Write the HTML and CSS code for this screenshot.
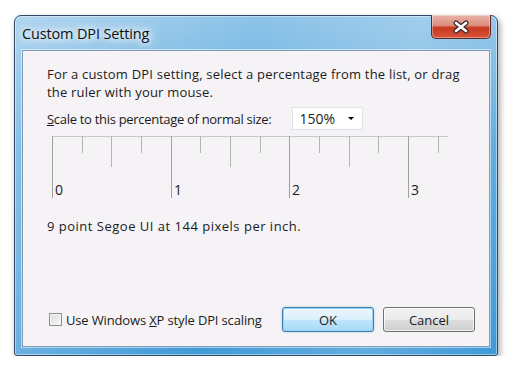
FILE: index.html
```html
<!DOCTYPE html>
<html lang="en">
<head>
    <meta charset="UTF-8">
    <meta name="viewport" content="width=device-width, initial-scale=1.0">
    <title>Custom DPI Setting</title>
    <link rel="stylesheet" href="styles.css">
</head>
<body>
<div class="window">
    <div class="titlebar">
        <span class="title">Custom DPI Setting</span>
        <button class="close" title="Close">
            <svg width="18" height="14" viewBox="-9 -7 18 14">
                <path d="M-5,-4 L5,4 M5,-4 L-5,4" stroke="#3a2a2a" stroke-width="5" stroke-linecap="round"/>
                <path d="M-5,-4 L5,4 M5,-4 L-5,4" stroke="#ffffff" stroke-width="2.6" stroke-linecap="round"/>
            </svg>
        </button>
    </div>

    <div class="client">
        <p class="intro">For a custom DPI setting, select a percentage from the list, or drag<br/>the ruler with your mouse.</p>

        <div class="scale-row">
            <label class="scale-label"><u>S</u>cale to this percentage of normal size:</label>
            <div class="combo">
                <span>150%</span>
                <span class="arrow"></span>
            </div>
        </div>

        <!-- ruler: one long tick per inch, quarter ticks between -->
        <svg class="ruler" width="397" height="63" viewBox="0 0 397 63">
            <g stroke="#b4b4b4" stroke-width="1">
                <line x1="0" y1="0.5" x2="396" y2="0.5" stroke="#c8c8c8"/>
                <line x1="0.5" y1="0" x2="0.5" y2="62" stroke="#a0a0a0"/>
                <line x1="30.5" y1="0" x2="30.5" y2="17"/>
                <line x1="59.5" y1="0" x2="59.5" y2="31"/>
                <line x1="89.5" y1="0" x2="89.5" y2="17"/>
                <line x1="119.5" y1="0" x2="119.5" y2="62" stroke="#a0a0a0"/>
                <line x1="148.5" y1="0" x2="148.5" y2="17"/>
                <line x1="178.5" y1="0" x2="178.5" y2="31"/>
                <line x1="208.5" y1="0" x2="208.5" y2="17"/>
                <line x1="237.5" y1="0" x2="237.5" y2="62" stroke="#a0a0a0"/>
                <line x1="267.5" y1="0" x2="267.5" y2="17"/>
                <line x1="297.5" y1="0" x2="297.5" y2="31"/>
                <line x1="326.5" y1="0" x2="326.5" y2="17"/>
                <line x1="356.5" y1="0" x2="356.5" y2="62" stroke="#a0a0a0"/>
                <line x1="386.5" y1="0" x2="386.5" y2="17"/>
            </g>
            <g class="ruler-nums">
                <text x="3" y="59">0</text>
                <text x="122" y="59">1</text>
                <text x="240" y="59">2</text>
                <text x="359" y="59">3</text>
            </g>
        </svg>

        <p class="sample">9 point Segoe UI at 144 pixels per inch.</p>

        <div class="footer">
            <label class="check"><span class="box"></span><span class="check-text">Use Windows <u>X</u>P style DPI scaling</span></label>
            <button class="btn btn-default">OK</button>
            <button class="btn">Cancel</button>
        </div>
    </div>
</div>
</body>
</html>
```

FILE: styles.css
```css
body {
    margin: 0;
    background-color: #ffffff;
    font-family: "Open Sans", "Noto Sans", sans-serif;
    font-size: 13px;
    color: #1a1c22;
}
.window {
    box-sizing: border-box;
    width: 484px;
    height: 341px;
    margin: 15px 0 0 14px;
    padding: 0 7px 8px 7px;
    display: flex;
    flex-direction: column;
    border: 1px solid #2f4a66;
    border-radius: 7px 7px 3px 3px;
    background:
        linear-gradient(100deg, rgba(255,255,255,0.3) 0%, rgba(255,255,255,0) 45%, rgba(255,255,255,0.18) 75%, rgba(255,255,255,0) 100%),
        linear-gradient(#8dc3e8 0%, #5aa9de 40%, #3f9ad8 100%);
    box-shadow: 2px 3px 6px rgba(0, 0, 0, 0.35), inset 0 0 0 1px rgba(255,255,255,0.45);
}
.titlebar {
    height: 34px;
    display: flex;
    justify-content: space-between;
    align-items: center;
}
.title {
    font-size: 14.5px;
    letter-spacing: -0.15px;
    color: #101010;
    text-shadow: 0 0 6px #ffffff, 0 0 10px #ffffff, 0 0 14px rgba(255,255,255,0.9);
}
.close {
    align-self: flex-start;
    margin: -1px -1px 0 0;
    width: 60px;
    height: 24px;
    padding: 0;
    display: flex;
    align-items: center;
    justify-content: center;
    border: 1px solid #5e2a26;
    border-top: none;
    border-radius: 0 0 5px 5px;
    background: linear-gradient(#eab5aa 0%, #dc8c7d 45%, #c8391f 55%, #d6543a 100%);
    box-shadow: inset 0 0 0 1px rgba(255,255,255,0.35);
}
.client {
    flex: 1;
    display: flex;
    flex-direction: column;
    align-items: flex-start;
    padding: 14px 14px 14px 24px;
    background-color: #f6f3f7;
    border: 1px solid #7f9db9;
    box-shadow: 0 0 0 1px rgba(255,255,255,0.5);
}
.intro {
    margin: 0;
    line-height: 18px;
    letter-spacing: 0.2px;
}
.scale-row {
    margin-top: 6px;
    display: flex;
    align-items: center;
}
.scale-label {
    line-height: 18px;
    letter-spacing: -0.3px;
}
.combo {
    box-sizing: border-box;
    width: 71px;
    height: 23px;
    margin-left: 21px;
    padding: 0 6px;
    display: flex;
    align-items: center;
    justify-content: space-between;
    background-color: #ffffff;
    border: 1px solid #e2e2e6;
    font-size: 14px;
}
.arrow {
    width: 0;
    height: 0;
    margin-right: 2px;
    border-left: 3px solid transparent;
    border-right: 3px solid transparent;
    border-top: 3px solid #000000;
}
.ruler {
    display: block;
    margin: 6px 0 0 5px;
}
.ruler-nums {
    font-family: "Open Sans", "Noto Sans", sans-serif;
    font-size: 14px;
    fill: #1a1c22;
}
.sample {
    margin: 18px 0 0 0;
    line-height: 18px;
    letter-spacing: 0.5px;
}
.footer {
    margin-top: auto;
    align-self: stretch;
    display: flex;
    align-items: center;
    gap: 9px;
}
.check {
    display: flex;
    align-items: center;
    gap: 4px;
    margin-left: 2px;
}
.check-text {
    letter-spacing: -0.15px;
}
.box {
    box-sizing: border-box;
    width: 13px;
    height: 13px;
    border: 1px solid #8e8f8f;
    background: linear-gradient(135deg, #dcdcdc, #f8f8f8);
    box-shadow: inset 0 0 0 1px #f4f4f4;
}
.btn {
    box-sizing: border-box;
    width: 92px;
    height: 25px;
    padding: 0;
    font-family: inherit;
    font-size: 13px;
    color: #1a1c22;
    border: 1px solid #707070;
    border-radius: 3px;
    background: linear-gradient(#f2f2f2 0%, #ebebeb 50%, #dddddd 51%, #cfcfcf 100%);
    box-shadow: inset 0 0 0 1px rgba(255,255,255,0.7);
}
.btn-default {
    margin-left: auto;
    border-color: #3c7fb1;
    background: linear-gradient(#eaf6fd 0%, #d9f0fc 50%, #bee6fd 51%, #a7d9f5 100%);
    box-shadow: inset 0 0 0 1px #94d1f4, 0 0 2px rgba(60,127,177,0.5);
}
```
